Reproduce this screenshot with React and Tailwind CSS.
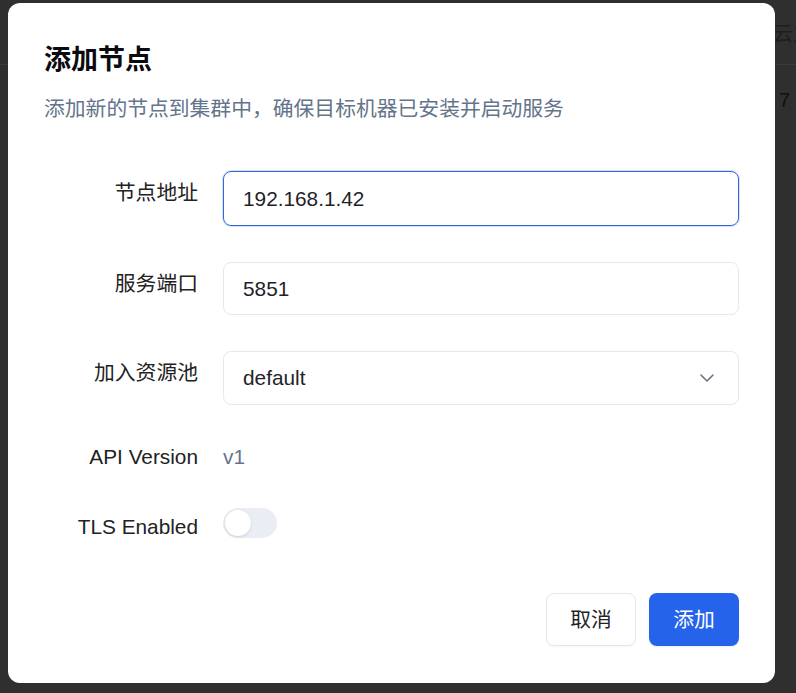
import React from "react";
import { ChevronDown } from "lucide-react";

const font = { fontFamily: '"Liberation Sans", "Noto Sans CJK SC", sans-serif' };

function Row({ label, children, labelPt = "pt-[7px]" }) {
  return (
    <div className="flex items-start">
      <div className={`w-[154px] shrink-0 text-right text-[20.8px] leading-[30px] text-[#222222] ${labelPt}`}>
        {label}
      </div>
      <div className="ml-[25px] flex-1">{children}</div>
    </div>
  );
}

export default function App() {
  return (
    <div className="relative h-[693px] w-full overflow-hidden bg-[#2f2f2f]" style={font}>
      {/* background page (dimmed) */}
      <div className="whitespace-nowrap">
        <div className="flex h-[65px] items-center border-b border-[#3a3a3a] pl-[773px] pt-[4px] text-[20px] text-[#1d1d1d]">
          云主机
        </div>
        <div className="flex h-[70px] items-center pl-[779px] text-[20px] text-[#111111]">7</div>
      </div>

      {/* dialog */}
      <div className="absolute left-[8px] top-[3px] w-[767px] rounded-[12px] bg-white px-[36px] pb-[37px] pt-[36px]">
        <h2 className="text-[27px] font-bold leading-[42px] text-[#0a0a0f]">添加节点</h2>
        <p className="mt-[13px] text-[20.8px] leading-[30px] text-[#64748b]">
          添加新的节点到集群中，确保目标机器已安装并启动服务
        </p>

        <div className="mt-[47px] flex flex-col gap-[36px]">
          <Row label="节点地址">
            <div className="flex h-[55px] items-center rounded-[8px] border border-[#3367d6] px-[19px] text-[20.8px] text-[#1f2328] ring-1 ring-[#3367d6]/20">
              192.168.1.42
            </div>
          </Row>
          <Row label="服务端口">
            <div className="flex h-[53px] items-center rounded-[8px] border border-[#e6e8ee] px-[19px] text-[20.8px] text-[#1f2328]">
              5851
            </div>
          </Row>
          <Row label="加入资源池">
            <div className="flex h-[54px] items-center justify-between rounded-[8px] border border-[#e6e8ee] pl-[19px] pr-[19px] text-[20.8px] text-[#1f2328]">
              <span>default</span>
              <ChevronDown size={24} strokeWidth={1.6} className="text-[#6b7280]" />
            </div>
          </Row>
          <Row label="API Version" labelPt="pt-[1px]">
            <div className="pt-[1px] text-[20.8px] leading-[30px] text-[#64748b]">v1</div>
          </Row>
          <Row label="TLS Enabled" labelPt="pt-[4px]">
            <div className="flex h-[30px] w-[54px] items-center rounded-full bg-[#eaeef4] px-[2px]">
              <div className="h-[26px] w-[26px] rounded-full bg-white shadow-[0_1px_3px_rgba(0,0,0,0.12)]" />
            </div>
          </Row>
        </div>

        <div className="mt-[51px] flex justify-end gap-[13px]">
          <button className="h-[53px] w-[90px] rounded-[8px] border border-[#e6e8ee] bg-white text-[20.8px] text-[#1f2328] shadow-[0_1px_2px_rgba(0,0,0,0.04)]">
            取消
          </button>
          <button className="h-[53px] w-[90px] rounded-[8px] bg-[#2563eb] text-[20.8px] text-white shadow-[0_1px_2px_rgba(0,0,0,0.08)]">
            添加
          </button>
        </div>
      </div>
    </div>
  );
}
